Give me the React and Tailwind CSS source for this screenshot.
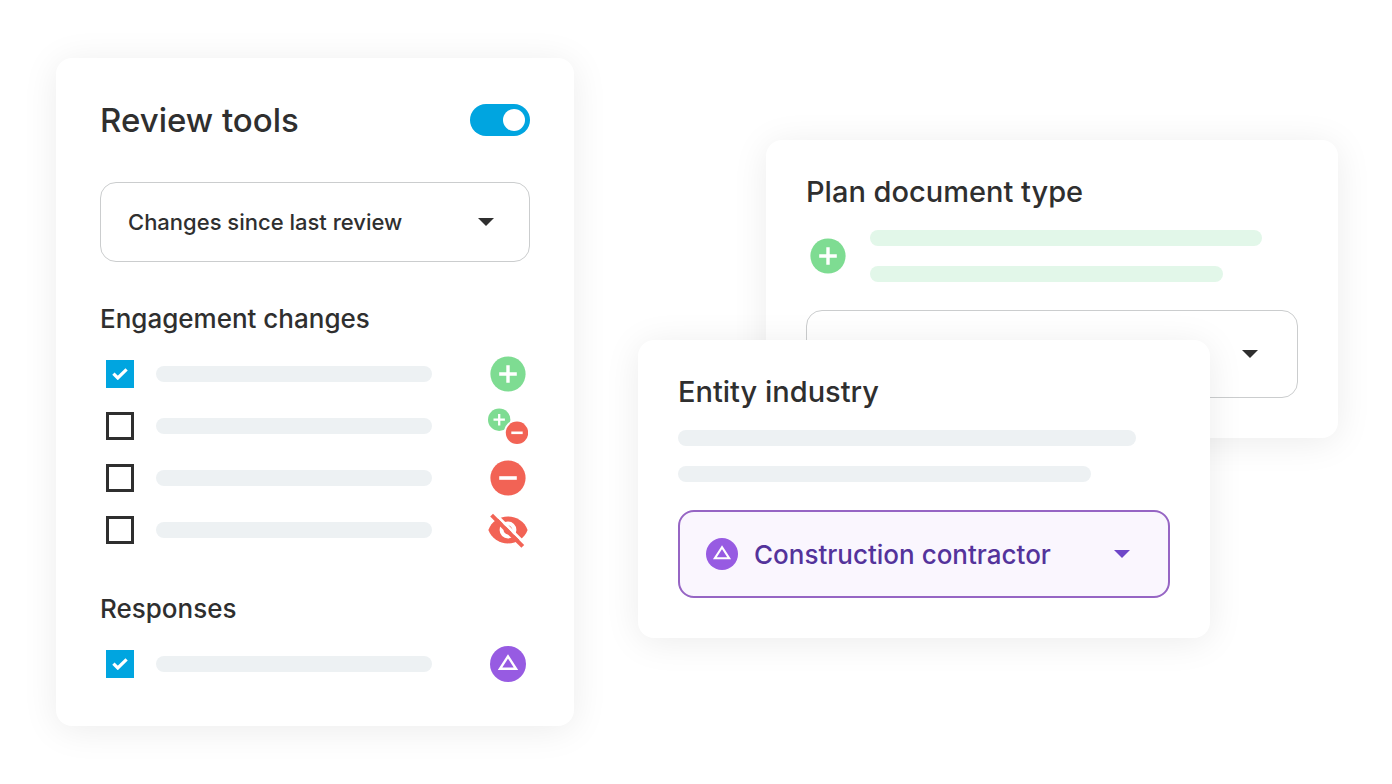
import { useState } from "react";

const ENGAGEMENT_CHANGES = [
  { id: "added", name: "Added", icon: AddedIcon, checked: true },
  { id: "modified", name: "Added and removed", icon: ModifiedIcon, checked: false },
  { id: "removed", name: "Removed", icon: RemovedIcon, checked: false },
  { id: "hidden", name: "Hidden", icon: HiddenIcon, checked: false },
];

const RESPONSES = [{ id: "response", name: "Changed responses", icon: DeltaIcon, checked: true }];

function AddedIcon({ className = "size-9" }) {
  return (
    <svg viewBox="0 0 36 36" className={className} aria-hidden="true">
      <circle cx="18" cy="18" r="17.6" fill="#7edc92" />
      <path d="M18 9.2v17.6M9.2 18h17.6" stroke="#fff" strokeWidth="3.4" />
    </svg>
  );
}

function RemovedIcon() {
  return (
    <svg viewBox="0 0 36 36" className="size-9" aria-hidden="true">
      <circle cx="18" cy="18" r="17.6" fill="#f26355" />
      <path d="M9.2 18h17.6" stroke="#fff" strokeWidth="3.6" />
    </svg>
  );
}

function ModifiedIcon() {
  return (
    <svg viewBox="0 0 40 40" className="size-10" aria-hidden="true">
      <circle cx="11.2" cy="13.7" r="11.2" fill="#7edc92" />
      <path d="M11.2 8v11.4M5.5 13.7h11.4" stroke="#fff" strokeWidth="2.3" />
      <circle cx="29" cy="26.8" r="13" fill="#fff" />
      <circle cx="29" cy="26.8" r="11.2" fill="#f26355" />
      <path d="M23.3 26.8h11.4" stroke="#fff" strokeWidth="2.6" />
    </svg>
  );
}

function HiddenIcon() {
  return (
    <svg viewBox="0 0 40 40" className="size-10" aria-hidden="true">
      <path
        d="M0.4 20C3.4 11.8 11 6.6 20 6.6S36.6 11.8 39.6 20C36.6 28.2 29 33.4 20 33.4S3.4 28.2 0.4 20Z"
        fill="#f26355"
      />
      <circle cx="20" cy="20" r="6.4" fill="none" stroke="#fff" strokeWidth="4" />
      <path d="M5.8 2.6 37.8 34.6" stroke="#fff" strokeWidth="2.8" />
      <path d="M3.6 5.2 34.8 36.4" stroke="#f26355" strokeWidth="4" />
    </svg>
  );
}

function DeltaIcon({ className = "size-9" }) {
  return (
    <svg viewBox="0 0 36 36" className={className} aria-hidden="true">
      <circle cx="18" cy="18" r="18" fill="#975be2" />
      <path d="M18 10.4 10 22.8h16Z" fill="none" stroke="#fff" strokeWidth="2.4" />
    </svg>
  );
}

function Card({ className = "", children }) {
  return (
    <section className={`rounded-2xl bg-white shadow-[0_4px_36px_rgba(0,0,0,0.08)] ${className}`}>
      {children}
    </section>
  );
}

function Bar({ className }) {
  return <span className={`block h-4 rounded-full ${className}`} />;
}

function Caret({ className }) {
  return (
    <svg viewBox="0 0 16 8" className={`pointer-events-none absolute top-1/2 h-2 w-4 -translate-y-1/2 ${className}`} aria-hidden="true">
      <path d="M0 0h16L8 8Z" fill="currentColor" />
    </svg>
  );
}

function ChangeRow({ item }) {
  const [checked, setChecked] = useState(item.checked);
  const Icon = item.icon;

  return (
    <li className="flex h-[52px] items-center">
      <label htmlFor={item.id} aria-label={item.name} className="flex flex-1 items-center gap-[22px]">
        <span className="grid size-7 shrink-0 place-items-center">
          <input
            id={item.id}
            type="checkbox"
            aria-label={item.name}
            checked={checked}
            onChange={(e) => setChecked(e.target.checked)}
            className="peer col-start-1 row-start-1 size-7 appearance-none border-3 border-[#2f2f2f] bg-white checked:border-[#00a5e0] checked:bg-[#00a5e0]"
          />
          <svg
            viewBox="0 0 16 12"
            className="pointer-events-none invisible col-start-1 row-start-1 h-3 w-4 peer-checked:visible"
            aria-hidden="true"
          >
            <path d="M1.4 5.6 5.8 10 14.6 1.4" fill="none" stroke="#fff" strokeWidth="3.2" />
          </svg>
        </span>
        <Bar className="flex-1 bg-[#edf1f3]" />
      </label>
      <span className="ml-14 flex w-10 justify-center">
        <Icon />
      </span>
    </li>
  );
}

function ReviewTools() {
  const [enabled, setEnabled] = useState(true);

  return (
    <Card className="px-11 pt-9 pb-9">
      <div className="flex items-center justify-between">
        <h1 className="text-[33px] leading-[52px] font-medium">
          <label htmlFor="review-tools">Review tools</label>
        </h1>
        <span className="grid items-center">
          <input
            id="review-tools"
            type="checkbox"
            role="switch"
            checked={enabled}
            onChange={(e) => setEnabled(e.target.checked)}
            className="peer col-start-1 row-start-1 h-8 w-15 appearance-none rounded-full bg-gray-300 checked:bg-[#00a5e0]"
          />
          <span className="pointer-events-none col-start-1 row-start-1 ml-[5px] size-[22px] rounded-full bg-white peer-checked:ml-[33px]" />
        </span>
      </div>

      <div className="relative mt-9">
        <select
          aria-label="Compare with"
          className="h-20 w-full appearance-none rounded-2xl border border-[#cbcdce] bg-white pl-[27px] text-[22px] font-medium"
        >
          <option>Changes since last review</option>
        </select>
        <Caret className="right-9" />
      </div>

      <h2 className="mt-10 text-[26px] leading-[34px] font-medium">Engagement changes</h2>
      <ul className="mt-3 pr-0.5 pl-1.5">
        {ENGAGEMENT_CHANGES.map((item) => (
          <ChangeRow key={item.id} item={item} />
        ))}
      </ul>

      <h2 className="mt-9 text-[26px] leading-[34px] font-medium">Responses</h2>
      <ul className="mt-3 pr-0.5 pl-1.5">
        {RESPONSES.map((item) => (
          <ChangeRow key={item.id} item={item} />
        ))}
      </ul>
    </Card>
  );
}

function PlanDocumentType() {
  return (
    <Card className="ml-32 p-10">
      <h2 className="text-[29px] leading-[24px] font-medium">Plan document type</h2>
      <div className="mt-[26px] flex items-center pl-1">
        <AddedIcon />
        <div className="ml-6 flex-1 space-y-5 pr-9">
          <Bar className="bg-[#e2f7e9]" />
          <Bar className="w-[90%] bg-[#e2f7e9]" />
        </div>
      </div>
      <div className="relative mt-7">
        <select
          aria-label="Plan document type"
          className="h-22 w-full appearance-none rounded-2xl border border-[#cbcdce] bg-white"
        />
        <Caret className="right-10" />
      </div>
    </Card>
  );
}

function EntityIndustry() {
  return (
    <Card className="relative -mt-[98px] mr-32 p-10">
      <h2 className="text-[29px] leading-[24px] font-medium">Entity industry</h2>
      <div className="mt-[26px] space-y-5">
        <Bar className="w-[93%] bg-[#edf1f3]" />
        <Bar className="w-[84%] bg-[#edf1f3]" />
      </div>
      <div className="relative mt-7">
        <select
          aria-label="Entity industry"
          className="h-22 w-full appearance-none rounded-2xl border-2 border-[#9665c4] bg-[#faf6fe] pl-[74px] text-[26px] font-medium text-[#54339b]"
        >
          <option>Construction contractor</option>
        </select>
        <DeltaIcon className="pointer-events-none absolute top-1/2 left-7 size-8 -translate-y-1/2" />
        <Caret className="right-10 text-[#6e46c8]" />
      </div>
    </Card>
  );
}

export default function App() {
  return (
    <main className="grid min-h-screen grid-cols-[518fr_700fr] items-start gap-16 bg-white py-[58px] pr-[54px] pl-14 font-['Inter',sans-serif] text-[#2f2f2f]">
      <ReviewTools />
      <div className="pt-[82px]">
        <PlanDocumentType />
        <EntityIndustry />
      </div>
    </main>
  );
}
